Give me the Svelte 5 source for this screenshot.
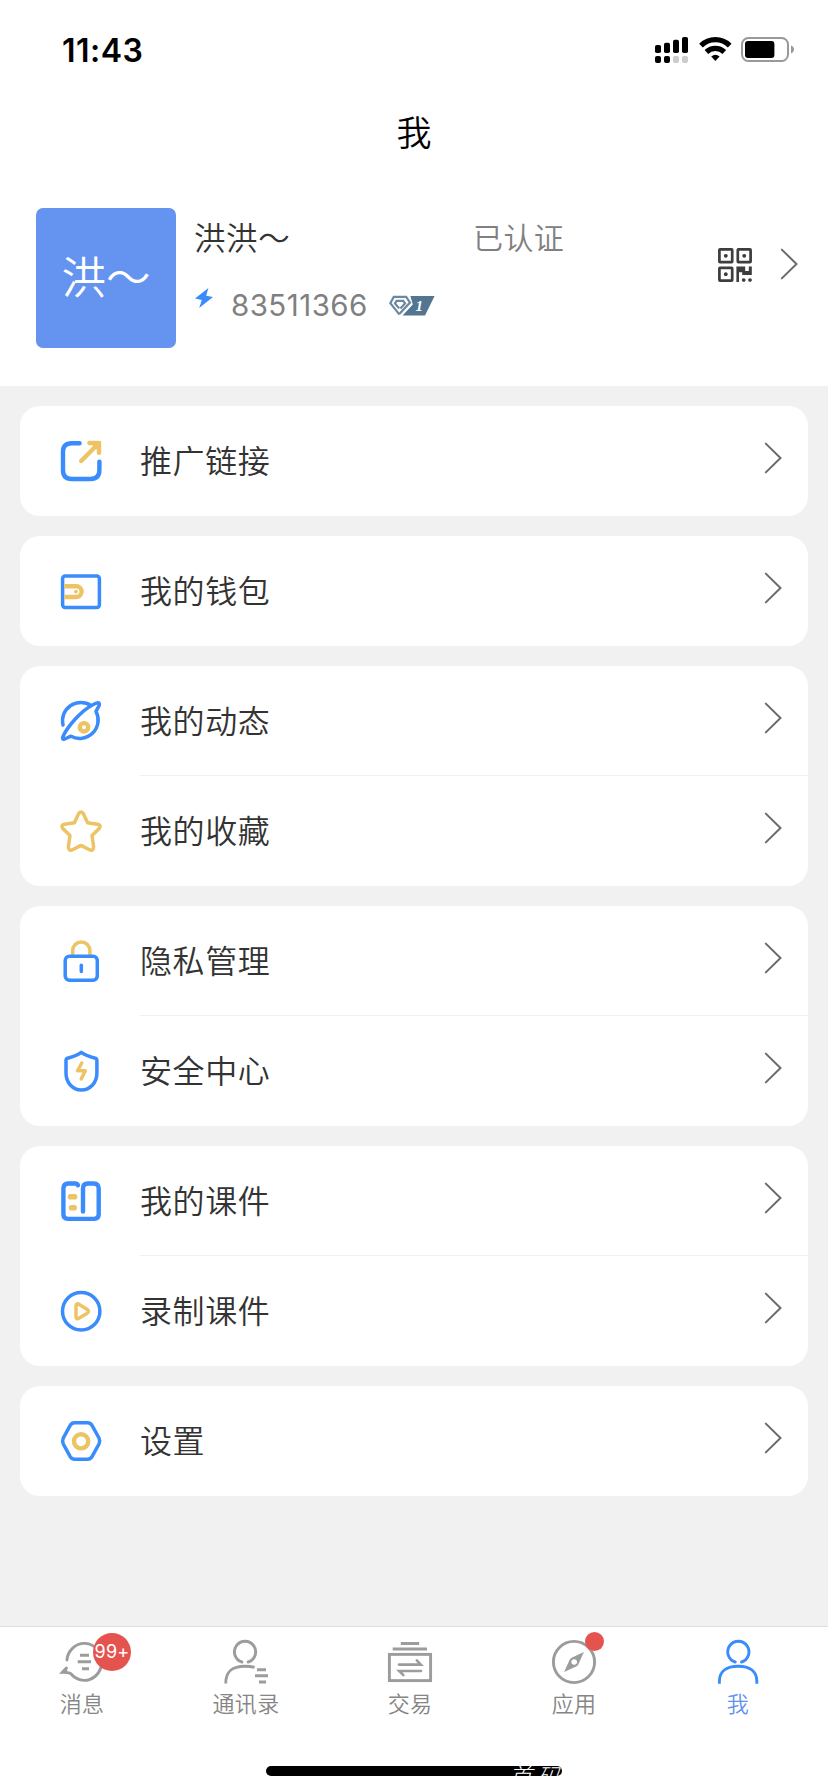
<script lang="ts">
  type MenuItem = {
    icon: string;
    label: string;
  };

  type Tab = {
    id: string;
    label: string;
    badge?: string;
    dot?: boolean;
  };

  const groups: MenuItem[][] = [
    [{ icon: "link", label: "推广链接" }],
    [{ icon: "wallet", label: "我的钱包" }],
    [
      { icon: "moments", label: "我的动态" },
      { icon: "star", label: "我的收藏" },
    ],
    [
      { icon: "lock", label: "隐私管理" },
      { icon: "shield", label: "安全中心" },
    ],
    [
      { icon: "course", label: "我的课件" },
      { icon: "record", label: "录制课件" },
    ],
    [{ icon: "settings", label: "设置" }],
  ];

  const tabs: Tab[] = [
    { id: "messages", label: "消息", badge: "99+" },
    { id: "contacts", label: "通讯录" },
    { id: "trade", label: "交易" },
    { id: "apps", label: "应用", dot: true },
    { id: "me", label: "我" },
  ];

  let active = $state("me");
</script>

{#snippet chevron()}
  <svg class="chevron" width="18" height="32" viewBox="0 0 18 32">
    <path d="M1.8 1.6L16.5 16L1.8 30.4" />
  </svg>
{/snippet}

{#snippet menuIcon(name: string)}
  <svg class="menu-icon" width="44" height="44" viewBox="0 0 44 44">
    {#if name === "link"}
      <path class="blue w4" d="M20.6 4.3H12.5Q4 4.3 4 12.5V31Q4 40 12.5 40H31.5Q40.4 40 40.4 31V22.6" />
      <path class="gold w4" d="M30.4 4H40V13.8M22.2 22L38 6" />
      <path class="gold-fill" d="M30 2H42V14L37 10L34 7Z" />
    {:else if name === "wallet"}
      <rect class="blue" x="3.6" y="7" width="36.8" height="31.4" rx="2.6" />
      <path class="gold w4 butt" d="M5.3 17.2H17.2a5.4 5.4 0 0 1 0 10.8H5.3" />
      <circle class="gold-fill" cx="17" cy="22.6" r="1.9" />
    {:else if name === "moments"}
      <path class="blue" d="M4 26A18.4 18.4 0 0 1 32 6.4" />
      <path class="blue" d="M3.8 38C8 28 22 12 33 6.2C36 4.4 38 3.8 39.2 3.8Q40.8 4 40.2 6.4L37 12.4A18.4 18.4 0 0 1 12 37.2L5.6 40Q2.6 40.8 3.8 38Z" />
      <circle class="gold w4" cx="25" cy="28.3" r="4.2" />
    {:else if name === "star"}
      <path class="gold" d="M19.6 4.8Q22 1.4 24.4 4.8L28.6 13.8L38.5 15.3Q42.8 16.4 40.2 19.5L33 26.5L34.6 37.5Q34.6 42.2 31 41L22 36.4L13 41Q9.4 42.2 9.4 37.5L11 26.5L3.8 19.5Q1.2 16.4 5.5 15.3L15.4 13.8Z" />
    {:else if name === "lock"}
      <path class="gold butt" d="M13.7 16V11.5a8.6 8.6 0 0 1 17.2 0V16" />
      <rect class="blue" x="6.2" y="17.2" width="32.1" height="24" rx="4.2" />
      <path class="blue" d="M22.3 26.2V32.6" />
    {:else if name === "shield"}
      <path class="blue" d="M22.3 3.3C18 6.6 13 8 8.6 9.2Q7 9.7 7 11.4V24C7 34 14 41 22.4 41S37.9 34 37.9 24V11.4Q37.9 9.7 36.3 9.2C31.7 8 26.6 6.6 22.3 3.3Z" />
      <path class="gold" d="M22.8 14L18.5 21.8H26.3L22.2 30" />
    {:else if name === "course"}
      <path class="blue w4" d="M18.9 6.4Q18.6 4.5 15.8 4.5H9Q4.4 4.5 4.4 9.2V35.6Q4.4 39.9 8.8 39.9H35.2Q39.7 39.9 39.7 35.6V9.4Q39.7 4.5 34.8 4.5H29Q24 4.5 24 9.4V32.6" />
      <path class="gold w5" d="M11.5 17.7H15.6M12.6 28.7H15.2" />
    {:else if name === "record"}
      <circle class="blue" cx="22.2" cy="22.3" r="18.7" />
      <path class="gold" d="M17 17.2Q17 13.6 20.2 15.4L28 20.2Q31 22.3 28 24.4L20.2 29.1Q17 31 17 27.4Z" />
    {:else}
      <path class="blue" d="M15.7 3.8H28.5Q31.5 3.8 33 6.4L40 19Q41.4 22 40 25L33 37.6Q31.5 40.2 28.5 40.2H15.7Q12.7 40.2 11.2 37.6L4.3 25Q2.9 22 4.3 19L11.2 6.4Q12.7 3.8 15.7 3.8Z" />
      <circle class="gold w4" cx="22.1" cy="22.3" r="7.1" />
    {/if}
  </svg>
{/snippet}

{#snippet tabIcon(name: string)}
  <svg class="tab-icon" width="50" height="50" viewBox="0 0 50 50">
    {#if name === "messages"}
      <path d="M9.9 23A17.5 18.6 0 0 1 44.8 25A17.5 18.6 0 0 1 13.8 36.6Q11.6 35.2 5.4 35.2L9.4 31" />
      <path class="solid" d="M3.4 36.6L10.2 30L10.2 35Z" />
      <path class="butt" d="M23 18.3H32M20.7 24.7H34M25 31.7H32" />
    {:else if name === "contacts"}
      <path d="M20.9 25A10.6 10.6 0 1 1 27.2 25" />
      <path class="butt" d="M4.7 46.6C4.7 34 11 29.2 24 29.2Q29.6 29.2 33.6 30.4" />
      <path class="butt" d="M36 32.7H45M34 38.7H47M38 45H45" />
    {:else if name === "trade"}
      <path class="butt" d="M15.8 6.5H34.2M7.7 12H42" />
      <rect x="4.4" y="17.4" width="41.2" height="26.2" />
      <path class="thin" d="M14 27.6H35.8L31.8 23.4M36 34H14.2L18.4 38.2" />
    {:else if name === "apps"}
      <circle cx="25" cy="25" r="20.6" />
      <path class="solid" fill-rule="evenodd" d="M34.9 15.1L29.4 27.2Q28.4 29.2 26.6 29.8L15.1 34.9L20.4 23.2Q21.2 21 23.6 20.2ZM25.2 22.2a2.8 2.8 0 1 0 0 5.6a2.8 2.8 0 1 0 0-5.6Z" />
    {:else}
      <path d="M22.2 25A10.6 10.6 0 1 1 28.5 25" />
      <path class="butt" d="M6.4 46.8V44C6.4 34 14 29.2 25.2 29.2S43.8 34 43.8 44V46.8" />
    {/if}
  </svg>
{/snippet}

<div class="screen">
  <div class="status-bar">
    <span class="time">11:43</span>
    <svg width="140" height="28" viewBox="0 0 140 28">
      <rect x="1" y="9" width="6" height="8" rx="1.8" />
      <rect x="10" y="6.7" width="6" height="10.3" rx="1.8" />
      <rect x="19" y="3.7" width="6" height="13.3" rx="1.8" />
      <rect x="28" y="1" width="6" height="16" rx="1.8" />
      <rect x="1" y="20" width="6" height="7" rx="2" />
      <rect x="10" y="20" width="6" height="7" rx="2" />
      <rect class="off" x="19" y="20" width="6" height="7" rx="2" />
      <rect class="off" x="28" y="20" width="6" height="7" rx="2" />
      <path class="wave" d="M47 9.6A20.4 20.4 0 0 1 75.7 9.6M52.4 16A13 13 0 0 1 70.3 16" />
      <path d="M57.2 20.4Q61.4 17.2 65.6 20.4L61.4 25Z" />
      <rect class="shell" x="88" y="2" width="46" height="23" rx="6.4" />
      <rect x="91" y="5" width="29.4" height="17" rx="3" />
      <path class="nub" d="M137 9.6Q140 10.8 140 13.5T137 17.4Z" />
    </svg>
  </div>

  <header class="title">我</header>

  <section class="profile">
    <div class="avatar">洪～</div>
    <div class="details">
      <div class="name-row">
        <span class="name">洪洪～</span>
        <span class="verified">已认证</span>
      </div>
      <div class="id-row">
        <svg class="bolt" width="18" height="20" viewBox="0 0 18 20">
          <path d="M13.4 0L0 10.4L6.8 12L4.2 20L18 9L11.2 7.8Z" />
        </svg>
        <span class="uid">83511366</span>
        <svg class="level" width="46" height="22" viewBox="0 0 46 22">
          <path d="M21.4 1H45.6L36 20.6H13.6L23.8 9.4Z" />
          <path class="gem" d="M10.5 19.6L1.3 8.2L4.8 1.9H17.2L21 7.6L10.8 18.6M10.2 13.4L6 8.4L7.6 5.8H14.2L16 8.4L11.4 13.4" />
          <text x="26.4" y="16.2">1</text>
        </svg>
      </div>
    </div>
    <svg class="qr" width="34" height="34" viewBox="0 0 34 34">
      <rect x="1.4" y="1.4" width="12.8" height="12.8" rx="0.6" />
      <rect x="19.8" y="1.4" width="12.8" height="12.8" rx="0.6" />
      <rect x="1.4" y="19.8" width="12.8" height="12.8" rx="0.6" />
      <path d="M7.8 5.9a1.9 1.9 0 1 0 .01 0ZM26.2 5.9a1.9 1.9 0 1 0 .01 0ZM7.8 24.3a1.9 1.9 0 1 0 .01 0ZM18.4 18.4H27.2V23H30.8V18.4H33.8V27H24.2V24.2H21V34H18.4ZM25.7 30.2a1.8 1.8 0 1 0 .01 0ZM32 30.2a1.8 1.8 0 1 0 .01 0Z" />
    </svg>
    {@render chevron()}
  </section>

  <main class="menu">
    {#each groups as group}
      <div class="card">
        {#each group as item}
          <div class="row">
            {@render menuIcon(item.icon)}
            <div class="row-body">
              <span class="row-label">{item.label}</span>
              {@render chevron()}
            </div>
          </div>
        {/each}
      </div>
    {/each}
  </main>

  <footer>
    <nav class="tabs">
      {#each tabs as tab}
        <button class="tab" class:active={tab.id === active} onclick={() => (active = tab.id)}>
          {@render tabIcon(tab.id)}
          <span>{tab.label}</span>
          {#if tab.badge}
            <span class="badge">{tab.badge}</span>
          {/if}
          {#if tab.dot}
            <span class="dot"></span>
          {/if}
        </button>
      {/each}
    </nav>
    <div class="home-bar"><span>首码</span></div>
  </footer>
</div>

<style>
  :global(body) {
    margin: 0;
    background: #fff;
  }

  .screen {
    width: 828px;
    height: 1792px;
    display: flex;
    flex-direction: column;
    overflow: hidden;
    background: #f1f1f1;
    color: #333;
    font-family: Inter, "Noto Sans CJK SC", sans-serif;
  }

  svg {
    display: block;
    flex-shrink: 0;
  }

  .status-bar {
    height: 98px;
    box-sizing: border-box;
    padding: 2px 34px 0 62px;
    display: flex;
    align-items: center;
    justify-content: space-between;
    background: #fff;
  }
  .time {
    color: #000;
    font-size: 32px;
    font-weight: 600;
    letter-spacing: 0.5px;
  }
  .off {
    fill: #ccc;
  }
  .wave {
    fill: none;
    stroke: #000;
    stroke-width: 5.2;
  }
  .shell {
    fill: none;
    stroke: #999;
    stroke-width: 2;
  }
  .nub {
    fill: #999;
  }

  .title {
    height: 68px;
    line-height: 70px;
    background: #fff;
    color: #000;
    font-size: 35px;
    font-weight: 350;
    text-align: center;
  }

  .profile {
    height: 220px;
    box-sizing: border-box;
    padding: 42px 30px 0 36px;
    display: flex;
    align-items: flex-start;
    background: #fff;
  }
  .avatar {
    width: 140px;
    height: 140px;
    line-height: 141px;
    border-radius: 7px;
    background: #6493f0;
    color: #fff;
    font-size: 44.5px;
    font-weight: 350;
    text-align: center;
  }
  .details {
    flex: 1;
    padding-left: 18px;
  }
  .name-row {
    display: flex;
    height: 60px;
    line-height: 61px;
    font-weight: 350;
  }
  .name {
    width: 279px;
    font-size: 31.5px;
    letter-spacing: 0.6px;
  }
  .verified {
    color: #808080;
    font-size: 30px;
    letter-spacing: 0.4px;
  }
  .id-row {
    display: flex;
    align-items: center;
    height: 74px;
  }
  .bolt {
    margin: -14px 18px 0 1px;
    fill: #3a8bfb;
  }
  .uid {
    width: 157px;
    color: #808080;
    font-size: 29.5px;
    font-weight: 400;
    letter-spacing: 0.45px;
  }
  .level {
    margin: 2px 0 0 1px;
    fill: #54758f;
  }
  .gem {
    fill: none;
    stroke: #6a889e;
    stroke-width: 2.2;
  }
  .level text {
    fill: #fff;
    font: italic 700 15px "Liberation Serif", serif;
  }
  .qr {
    margin: 40px 28px 0 0;
    fill: #3d3d3d;
  }
  .qr rect {
    fill: none;
    stroke: #3d3d3d;
    stroke-width: 2.7;
  }
  .profile .chevron {
    margin-top: 40px;
  }

  .chevron {
    fill: none;
    stroke: #6a6a6a;
    stroke-width: 2;
    stroke-linecap: round;
  }

  .menu {
    flex: 1;
    padding: 20px;
    display: flex;
    flex-direction: column;
    gap: 20px;
  }
  .card {
    border-radius: 20px;
    background: #fff;
  }
  .row {
    display: flex;
    align-items: center;
    height: 110px;
    padding-left: 39px;
  }
  .row-body {
    flex: 1;
    height: 100%;
    box-sizing: border-box;
    margin-left: 37px;
    padding-right: 26px;
    display: flex;
    align-items: center;
    justify-content: space-between;
    border-bottom: 1px solid transparent;
  }
  .row:not(:last-child) .row-body {
    border-bottom-color: #f0f0f0;
  }
  .row-label {
    margin-bottom: 4px;
    font-size: 32px;
    font-weight: 350;
    letter-spacing: 0.6px;
  }
  .row .chevron {
    margin-bottom: 6px;
  }

  .menu-icon {
    fill: none;
    stroke-width: 3.5;
    stroke-linecap: round;
    stroke-linejoin: round;
  }
  .blue {
    stroke: #3a8bfb;
  }
  .gold {
    stroke: #ecc365;
  }
  .gold-fill {
    fill: #ecc365;
  }
  .w4 {
    stroke-width: 4.4;
  }
  .w5 {
    stroke-width: 5.6;
  }
  .butt {
    stroke-linecap: butt;
    stroke-linejoin: miter;
  }

  footer {
    height: 166px;
    box-sizing: border-box;
    border-top: 1px solid #dedede;
    background: #fff;
  }
  .tabs {
    display: flex;
    height: 139px;
  }
  .tab {
    position: relative;
    width: 164px;
    padding: 10px 0 0;
    border: 0;
    background: none;
    display: flex;
    flex-direction: column;
    align-items: center;
    color: #858585;
    font: 350 22px/34px Inter, "Noto Sans CJK SC", sans-serif;
    letter-spacing: 0.3px;
  }
  .tab-icon {
    fill: none;
    stroke: #9c9c9c;
    stroke-width: 2.9;
    stroke-linecap: round;
  }
  .tab-icon .thin {
    stroke-width: 2.6;
  }
  .tab-icon .solid {
    fill: #9c9c9c;
    stroke: none;
  }
  .tab.active {
    color: #6493f0;
  }
  .tab.active .tab-icon {
    stroke: #3a8bfb;
  }
  .badge {
    position: absolute;
    top: 6px;
    left: 93px;
    width: 38px;
    height: 38px;
    line-height: 37px;
    border-radius: 50%;
    background: #e5534e;
    color: #fff;
    font-size: 18px;
    font-weight: 400;
    text-align: center;
  }
  .dot {
    position: absolute;
    top: 5px;
    left: 93px;
    width: 19px;
    height: 19px;
    border-radius: 50%;
    background: #e5534e;
  }

  .home-bar {
    width: 296px;
    height: 10px;
    margin-left: 266px;
    border-radius: 5px;
    overflow: hidden;
    background: #000;
    color: #fff;
    text-align: right;
  }
  .home-bar span {
    display: block;
    margin-right: -3px;
    font-size: 23px;
    font-style: italic;
    font-weight: 300;
    letter-spacing: 5px;
    line-height: 23px;
  }
</style>
